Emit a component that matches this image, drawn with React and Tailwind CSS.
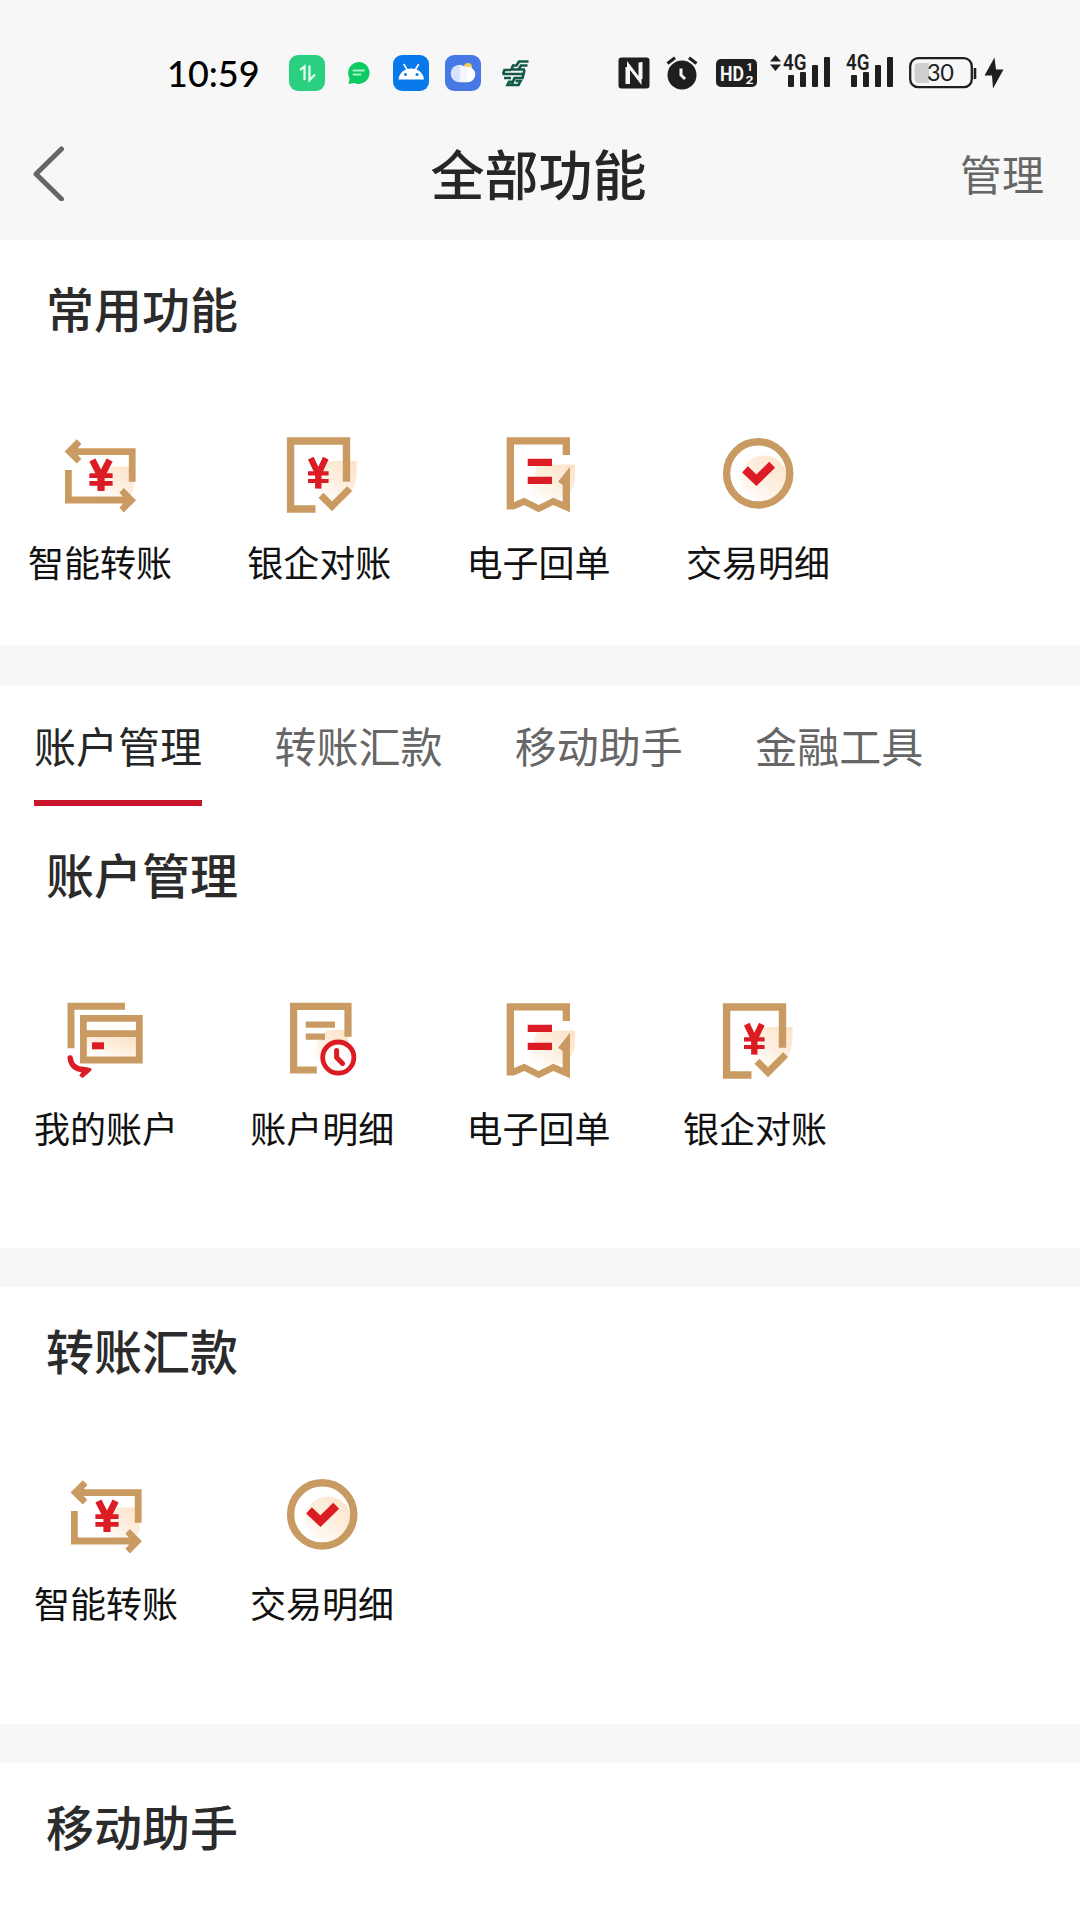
import { useState } from 'react';

const GOLD = '#c99b63';
const RED = '#dc1c24';

function Peach({ id }) {
  return (
    <defs>
      <linearGradient id={id} x1="1" y1="0" x2="0.25" y2="1">
        <stop offset="0" stopColor="#fce2c6" />
        <stop offset="0.55" stopColor="#fdefe0" />
        <stop offset="1" stopColor="#fffdfb" />
      </linearGradient>
    </defs>
  );
}

function IconBox({ children }) {
  return (
    <svg viewBox="0 0 80 80" className="h-20 w-20 shrink-0" fill="none">
      {children}
    </svg>
  );
}

function TransferIcon() {
  return (
    <IconBox>
      <Peach id="peach-transfer" />
      <path d="M52 31.5H74V48Q74 66 56 66H38Q40 38 52 31.5Z" fill="url(#peach-transfer)" />
      <path d="M13 16.7H72.2V46.7" stroke={GOLD} strokeWidth="6.8" />
      <path d="M4.6 16.5L16.8 4.2L21.4 8.8L18 13V20.4L21.4 23.8L16.8 28.6Z" fill={GOLD} />
      <path d="M8.4 35V65H68" stroke={GOLD} strokeWidth="6.8" />
      <path d="M76 65.2L63.8 53L59.4 57.6L62.8 61.6V69L59.4 72.6L63.8 77.4Z" fill={GOLD} />
      <path d="M32.4 25L41 42L49.6 25" stroke={RED} strokeWidth="6.8" />
      <path d="M41 40V56" stroke={RED} strokeWidth="7.2" />
      <path d="M29.4 40.6H52.6M29.4 48.4H52.6" stroke={RED} strokeWidth="4.6" />
    </IconBox>
  );
}

function ReconcileIcon() {
  return (
    <IconBox>
      <Peach id="peach-reconcile" />
      <path d="M48 26H77.5V40Q76 58 64 66L53 68L38 66Q38 40 48 26Z" fill="url(#peach-reconcile)" />
      <path d="M36.5 74H11.6V6H67.5V46.7" stroke={GOLD} strokeWidth="7.4" />
      <path d="M42 60.2L53 71.2L70.6 53.6" stroke={GOLD} strokeWidth="7" />
      <path d="M31.8 23.2L39.3 39L46.8 23.2" stroke={RED} strokeWidth="6.2" />
      <path d="M39.3 38V53.6" stroke={RED} strokeWidth="6.4" />
      <path d="M29 38.4H49.6M29 46H49.6" stroke={RED} strokeWidth="4.2" />
    </IconBox>
  );
}

function ReceiptIcon() {
  return (
    <IconBox>
      <Peach id="peach-receipt" />
      <path d="M38 29.4H76V44Q75 56 66 63L54 64L38 66L30 60Z" fill="url(#peach-receipt)" />
      <path
        d="M71 20V2.3H7.7V74.6H15L25.3 70L39.7 77.3L54.3 70L71 77.3V31.7L59 46.7L63.7 50V66.7L54.3 62.7L39.7 70L25.3 62.7L15 67V9.6H63.7V20Z"
        fill={GOLD}
      />
      <path d="M28.7 27.4H53M28.7 45.4H53" stroke={RED} strokeWidth="7.4" />
    </IconBox>
  );
}

function CheckIcon() {
  return (
    <IconBox>
      <Peach id="peach-check" />
      <circle cx="46" cy="43.5" r="23" fill="url(#peach-check)" />
      <circle cx="40.2" cy="38.4" r="31.6" stroke={GOLD} strokeWidth="7.4" />
      <path d="M27 34.4L38.4 45.2L54.2 29.8" stroke={RED} strokeWidth="8.4" />
    </IconBox>
  );
}

function CardsIcon() {
  return (
    <IconBox>
      <Peach id="peach-cards" />
      <path d="M5 47.3V5.3H59" stroke={GOLD} strokeWidth="7" />
      <path d="M20 36H70V56H20Z" fill="url(#peach-cards)" />
      <path d="M17.4 17.4H73.3V59H17.4ZM17.4 32.6H73.3" stroke={GOLD} strokeWidth="6.8" />
      <path d="M26 44.8H38" stroke={RED} strokeWidth="7" />
      <path d="M4.2 57Q5.5 68 17.5 68.8" stroke={RED} strokeWidth="5.4" strokeLinecap="round" />
      <path d="M16 66L24.6 67.6Q25.6 68.6 24.6 69.8L16.6 76.6L13.8 74.6L16 71Z" fill={RED} stroke={RED} strokeLinejoin="round" />
    </IconBox>
  );
}

function DetailIcon() {
  return (
    <IconBox>
      <Peach id="peach-detail" />
      <path d="M46 29H66V45L46 66L32 58Q34 36 46 29Z" fill="url(#peach-detail)" />
      <path d="M34.8 69H11.6V5.3H66V35.7" stroke={GOLD} strokeWidth="7.2" />
      <path d="M23.7 23.6H53M23.7 35.6H43" stroke={GOLD} strokeWidth="6.4" />
      <circle cx="56.3" cy="56.6" r="15.6" fill="#fffdfb" stroke={RED} strokeWidth="4.8" />
      <path d="M54.6 49.4V56.4L60.6 62.4" stroke={RED} strokeWidth="5" strokeLinecap="round" strokeLinejoin="round" />
    </IconBox>
  );
}

const common = [
  { label: '智能转账', Icon: TransferIcon },
  { label: '银企对账', Icon: ReconcileIcon },
  { label: '电子回单', Icon: ReceiptIcon },
  { label: '交易明细', Icon: CheckIcon },
];

const account = [
  { label: '我的账户', Icon: CardsIcon },
  { label: '账户明细', Icon: DetailIcon },
  { label: '电子回单', Icon: ReceiptIcon },
  { label: '银企对账', Icon: ReconcileIcon },
];

const transfer = [
  { label: '智能转账', Icon: TransferIcon },
  { label: '交易明细', Icon: CheckIcon },
];

const tabs = ['账户管理', '转账汇款', '移动助手', '金融工具'];

function FeatureRow({ items, className }) {
  return (
    <div className={`flex ${className}`}>
      {items.map(({ label, Icon }) => (
        <button key={label} className="flex w-36 flex-col items-center">
          <Icon />
          <span className="mt-[22px] text-[36px] leading-[48px] whitespace-nowrap text-[#111]">{label}</span>
        </button>
      ))}
    </div>
  );
}

function SectionTitle({ children }) {
  return <h2 className="pl-[46px] text-[48px] leading-[64px] font-medium text-[#2b2b2b]">{children}</h2>;
}

function Signal({ arrows }) {
  return (
    <svg viewBox="0 -8 60 56" className="h-14 w-[60px]" fill="#1f1f1f">
      {arrows && <path d="M0 8.5L5.5 2L11 8.5ZM0 11.5L5.5 18L11 11.5Z" />}
      <rect x="18" y="22" width="6" height="12" rx="1" />
      <rect x="30" y="19" width="6" height="15" rx="1" />
      <rect x="42" y="12" width="6" height="22" rx="1" />
      <rect x="54" y="4" width="6" height="30" rx="1" />
      <text x="13" y="17.2" fontFamily="Roboto, sans-serif" fontSize="21.5" fontWeight="600" textLength="23.5" lengthAdjust="spacingAndGlyphs">4G</text>
    </svg>
  );
}

function StatusBar() {
  return (
    <div className="flex h-10 items-center pl-[167px]">
      <span className="w-[92px] font-[Lato] text-[36px] leading-[38px] font-medium whitespace-nowrap text-black">10:59</span>

      <svg viewBox="0 0 36 36" className="ml-[30px] size-9" fill="none">
        <rect width="36" height="36" rx="9" fill="#2bcf80" />
        <path d="M11 15L15.5 11.5V25M20.5 10.5V25L26 19.5" stroke="#e9fff3" strokeWidth="2.2" />
      </svg>
      <svg viewBox="0 0 24 24" className="ml-[22px] size-6" fill="none">
        <path d="M12 1A11 11 0 1 1 7 22L1.5 23L2.6 17.5A11 11 0 0 1 12 1Z" fill="#0ccb62" />
        <path d="M6.5 9.5H17M6.5 13.5H13.5" stroke="#a8f3c6" strokeWidth="2" strokeLinecap="round" />
      </svg>
      <svg viewBox="0 0 36 36" className="ml-[22px] size-9" fill="none">
        <rect width="36" height="36" rx="9" fill="#0879ea" />
        <path d="M11 9.5L14 14.5M25.5 9.5L22.5 14.5" stroke="#fff" strokeWidth="1.6" strokeLinecap="round" />
        <path d="M5.5 24.5A12.8 12.2 0 0 1 31 24.5Z" fill="#fff" />
        <circle cx="12.5" cy="19.5" r="1.5" fill="#0879ea" />
        <circle cx="24" cy="19.5" r="1.5" fill="#0879ea" />
      </svg>
      <svg viewBox="0 0 36 36" className="ml-4 size-9" fill="none">
        <rect width="36" height="36" rx="9" fill="#4678e6" />
        <circle cx="23" cy="12" r="4" fill="#f5cf4f" />
        <circle cx="14.500" cy="18.5" r="8.8" fill="#d8e4fb" />
        <circle cx="22.5" cy="19.5" r="7.8" fill="#fff" />
        <path d="M15 10.5V27.300H22.500V12Z" fill="#f3f7fe" />
      </svg>
      <svg viewBox="0 0 28 28" className="ml-[21px] size-7" fill="none" stroke="#145a48" strokeWidth="2.7">
        <path d="M26.5 2.5H17L14.500 6.500H11L9.5 10.5H23M25.500 6.5H19L16.500 10.5" />
        <path d="M0.500 15H21.5M2 19H9M22.500 11L20.500 19H12.5L9.5 26H5.5L7 22.8H10M9 26H16.500L18.500 22H13.500M1 15L2.500 11H9" />
      </svg>

      <svg viewBox="0 0 32 32" className="ml-[88px] size-8" fill="none">
        <rect x="0.5" y="0.5" width="31" height="31" rx="3" fill="#1f1f1f" />
        <path d="M10.5 27V8.5L22 23.5V5.5" stroke="#f7f7f7" strokeWidth="3" />
        <path d="M8.5 10V27M23.5 5V22" stroke="#f7f7f7" strokeWidth="2" />
      </svg>
      <svg viewBox="0 0 32 34" className="ml-4 h-[34px] w-8" fill="none">
        <circle cx="16" cy="19" r="14.5" fill="#1f1f1f" />
        <path d="M1.5 7.5L9 1.8M30.5 7.5L23 1.8" stroke="#1f1f1f" strokeWidth="3.2" />
        <path d="M15 12.5V19L19 23" stroke="#f7f7f7" strokeWidth="3" />
      </svg>
      <svg viewBox="0 0 41 28" className="ml-[18px] h-7 w-[41px]" fill="#f7f7f7" fontFamily="Roboto, sans-serif" fontWeight="700">
        <rect width="41" height="28" rx="5" fill="#1f1f1f" />
        <text x="4" y="21.5" fontSize="21" textLength="24" lengthAdjust="spacingAndGlyphs">HD</text>
        <text x="30.5" y="12" fontSize="11">1</text>
        <text x="29.5" y="25" fontSize="11" textLength="8" lengthAdjust="spacingAndGlyphs">2</text>
      </svg>
      <div className="ml-[13px]">
        <Signal arrows />
      </div>
      <div className="ml-[3px]">
        <Signal />
      </div>
      <svg viewBox="0 0 68 32" className="ml-4 h-8 w-[68px]" fill="none">
        <rect x="1.2" y="1.2" width="61.6" height="29" rx="8" stroke="#1f1f1f" strokeWidth="2.3" />
        <path d="M10 6H20V26H10Q5.5 26 5.5 21.5V10.5Q5.5 6 10 6Z" fill="#cfcfcf" />
        <path d="M66 11V22" stroke="#1f1f1f" strokeWidth="2.6" />
        <text x="18" y="24" fill="#1f1f1f" fontFamily="Lato, sans-serif" fontSize="23.5" textLength="27">30</text>
      </svg>
      <svg viewBox="0 0 20 32" className="ml-[7px] h-8 w-5" fill="#1f1f1f">
        <path d="M10.5 0.5L0.5 18.5H8L9 31.5L19.5 12.5H12Z" />
      </svg>
    </div>
  );
}

export default function App() {
  const [active, setActive] = useState(tabs[0]);

  return (
    <div className="h-[1920px] w-[1080px] overflow-hidden bg-white font-['Noto_Sans_CJK_SC',sans-serif]">
      <header className="h-[240px] bg-[#f7f7f7] pt-[53px]">
        <StatusBar />
        <div className="mt-[40px] grid h-20 grid-cols-[1fr_auto_1fr] items-center pr-9 pl-[33px]">
          <button aria-label="返回" className="justify-self-start">
            <svg viewBox="0 0 34 56" className="h-14 w-[34px]" fill="none">
              <path d="M28.5 4L3 29L28.5 54" stroke="#666" strokeWidth="5" strokeLinecap="round" strokeLinejoin="round" />
            </svg>
          </button>
          <h1 className="text-[54px] leading-[72px] font-medium text-[#262626]">全部功能</h1>
          <button className="justify-self-end text-[42px] leading-[56px] text-[#666]">管理</button>
        </div>
      </header>

      <section className="h-[405px] pt-[35px]">
        <SectionTitle>常用功能</SectionTitle>
        <FeatureRow items={common} className="mt-24 gap-[75.3px] pl-7" />
      </section>

      <div className="h-10 bg-[#f7f7f7]" />

      <nav className="flex h-[121px] gap-[72.4px] pl-[34px]">
        {tabs.map((tab) => (
          <button
            key={tab}
            onClick={() => setActive(tab)}
            className={`flex h-full flex-col items-start justify-end text-[42px] leading-[56px] ${
              tab === active ? 'text-[#262626]' : 'text-[#666]'
            }`}
          >
            {tab}
            <span className={`mt-[27px] h-[6px] w-full ${tab === active ? 'bg-[#c9152b]' : ''}`} />
          </button>
        ))}
      </nav>

      <section className="h-[442px] pt-[35px]">
        <SectionTitle>账户管理</SectionTitle>
        <FeatureRow items={account} className="mt-24 gap-[72.3px] pl-[34px]" />
      </section>

      <div className="h-[39px] bg-[#f7f7f7]" />

      <section className="h-[437px] pt-[30px]">
        <SectionTitle>转账汇款</SectionTitle>
        <FeatureRow items={transfer} className="mt-[95px] gap-[72px] pl-[34px]" />
      </section>

      <div className="h-[39px] bg-[#f7f7f7]" />

      <section className="pt-[30px]">
        <SectionTitle>移动助手</SectionTitle>
      </section>
    </div>
  );
}
